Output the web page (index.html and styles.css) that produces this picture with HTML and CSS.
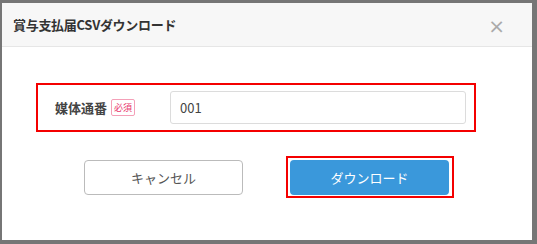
FILE: index.html
```html
<!DOCTYPE html>
<html lang="ja">
<head>
    <meta charset="UTF-8">
    <meta name="viewport" content="width=device-width, initial-scale=1.0">
    <title>賞与支払届CSVダウンロード</title>
    <link rel="stylesheet" href="styles.css">
</head>
<body>
    <!-- モーダル -->
    <div class="modal">
        <div class="modal-header">
            <h2 class="modal-title">賞与支払届CSVダウンロード</h2>
            <span class="close">&times;</span>
        </div>

        <div class="modal-body">
            <div class="form-row">
                <label for="mediaNo" class="form-label">
                    媒体通番 <span class="required">必須</span>
                </label>
                <input type="text" id="mediaNo" class="form-input" value="001">
            </div>

            <div class="button-row">
                <button class="btn btn-cancel">キャンセル</button>
                <div class="highlight">
                    <button class="btn btn-download">ダウンロード</button>
                </div>
            </div>
        </div>
    </div>
</body>
</html>
```

FILE: styles.css
```css
body {
    margin: 0;
    padding: 3px 5px 4px 2px;
    background-color: #767676; /* オーバーレイ */
    font-family: "Noto Sans CJK JP", "Noto Sans", sans-serif;
    color: #333;
}

.modal {
    width: 530px;
    height: 237px;
    background-color: #fff;
    display: flex;
    flex-direction: column;
}

.modal-header {
    height: 43px;
    background-color: #f7f7f7;
    border-bottom: 1px solid #e6e6e6;
    display: flex;
    align-items: center;
    justify-content: space-between;
    padding: 0 27px 0 11px;
}

.modal-title {
    margin: 0;
    font-size: 13px;
    font-weight: bold;
    color: #333;
    letter-spacing: -0.3px;
}

.close {
    font-family: "DejaVu Sans", sans-serif;
    font-size: 20px;
    font-weight: normal;
    color: #aaa;
    line-height: 1;
    margin-top: 2px;
}

.modal-body {
    padding: 36px 0 0 34px;
}

/* 赤枠 */
.form-row {
    width: 440px;
    height: 49px;
    box-sizing: border-box;
    border: 2px solid #f40000;
    display: flex;
    align-items: center;
    padding-left: 17px;
}

.form-label {
    width: 115px;
    font-size: 13px;
    font-weight: bold;
    color: #444;
    display: flex;
    align-items: center;
    gap: 4px;
}

.required {
    font-size: 9px;
    font-weight: normal;
    color: #e8336a;
    border: 1px solid #f4a0b8;
    border-radius: 2px;
    padding: 2px 2px;
    line-height: 11px;
}

.form-input {
    width: 296px;
    height: 33px;
    box-sizing: border-box;
    border: 1px solid #dcdcdc;
    border-radius: 3px;
    padding: 0 9px;
    font-family: inherit;
    font-size: 13px;
    color: #444;
}

.button-row {
    display: flex;
    align-items: flex-start;
    gap: 43px;
    margin-top: 24px;
    margin-left: 48px;
}

.btn {
    width: 159px;
    height: 35px;
    border-radius: 4px;
    font-family: inherit;
    font-size: 13px;
    cursor: pointer;
    display: block;
}

.btn-cancel {
    margin-top: 4px;
    background-color: #fff;
    border: 1px solid #bbb;
    color: #555;
}

.highlight {
    border: 2px solid #f40000;
    padding: 2px 3px 1px 2px;
}

.btn-download {
    background-color: #3a98db;
    border: none;
    color: #fff;
}
```
